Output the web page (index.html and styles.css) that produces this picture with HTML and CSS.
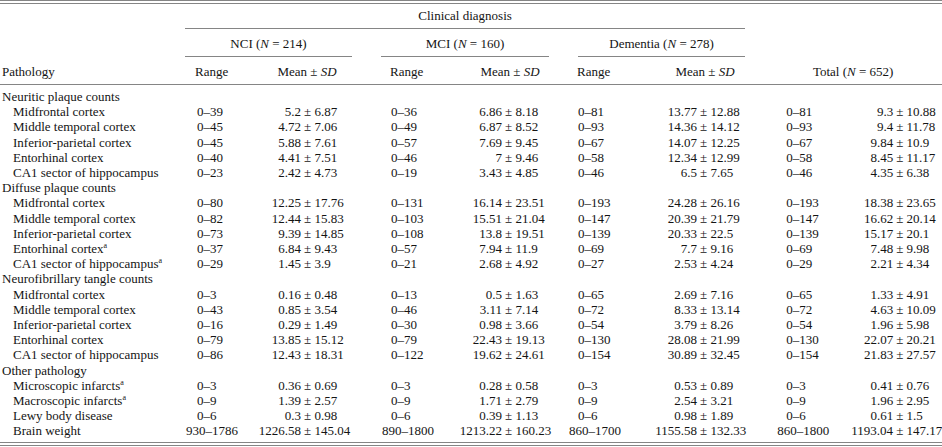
FILE: index.html
```html
<!DOCTYPE html>
<html>
<head>
<meta charset="utf-8">
<link rel="stylesheet" href="styles.css">
</head>
<body>
<table class="tbl">
<colgroup>
<col class="w-path"><col class="w-nr"><col class="w-nl"><col class="w-nm">
<col class="w-mr"><col class="w-ml"><col class="w-mm">
<col class="w-dr"><col class="w-dl"><col class="w-dm">
<col class="w-tr"><col class="w-tl"><col class="w-tm">
</colgroup>
<thead>
<tr class="h1">
<th></th>
<th colspan="9"><div class="rule rule-cd">Clinical diagnosis</div></th>
<th colspan="3"></th>
</tr>
<tr class="h2">
<th></th>
<th colspan="3"><div class="rule">NCI (<i>N</i> = 214)</div></th>
<th colspan="3"><div class="rule rule-mci">MCI (<i>N</i> = 160)</div></th>
<th colspan="3"><div class="rule rule-dem">Dementia (<i>N</i> = 278)</div></th>
<th colspan="3"></th>
</tr>
<tr class="h3">
<th class="path">Pathology</th>
<th class="rng n">Range</th>
<th colspan="2" class="mh mh-n">Mean ± <i>SD</i></th>
<th class="rng m">Range</th>
<th colspan="2" class="mh mh-m">Mean ± <i>SD</i></th>
<th class="rng d">Range</th>
<th colspan="2" class="mh mh-d">Mean ± <i>SD</i></th>
<th colspan="3" class="mh mh-t">Total (<i>N</i> = 652)</th>
</tr>
</thead>
<tbody>
<tr class="first"><td class="grp" colspan="13">Neuritic plaque counts</td></tr>
<tr><td class="item">Midfrontal cortex</td><td class="rng n">0–39</td><td class="ml">5.2</td><td class="mr">± 6.87</td><td class="rng m">0–36</td><td class="ml">6.86</td><td class="mr">± 8.18</td><td class="rng d">0–81</td><td class="ml">13.77</td><td class="mr">± 12.88</td><td class="rng t">0–81</td><td class="ml">9.3</td><td class="mr">± 10.88</td></tr>
<tr><td class="item">Middle temporal cortex</td><td class="rng n">0–45</td><td class="ml">4.72</td><td class="mr">± 7.06</td><td class="rng m">0–49</td><td class="ml">6.87</td><td class="mr">± 8.52</td><td class="rng d">0–93</td><td class="ml">14.36</td><td class="mr">± 14.12</td><td class="rng t">0–93</td><td class="ml">9.4</td><td class="mr">± 11.78</td></tr>
<tr><td class="item">Inferior-parietal cortex</td><td class="rng n">0–45</td><td class="ml">5.88</td><td class="mr">± 7.61</td><td class="rng m">0–57</td><td class="ml">7.69</td><td class="mr">± 9.45</td><td class="rng d">0–67</td><td class="ml">14.07</td><td class="mr">± 12.25</td><td class="rng t">0–67</td><td class="ml">9.84</td><td class="mr">± 10.9</td></tr>
<tr><td class="item">Entorhinal cortex</td><td class="rng n">0–40</td><td class="ml">4.41</td><td class="mr">± 7.51</td><td class="rng m">0–46</td><td class="ml">7</td><td class="mr">± 9.46</td><td class="rng d">0–58</td><td class="ml">12.34</td><td class="mr">± 12.99</td><td class="rng t">0–58</td><td class="ml">8.45</td><td class="mr">± 11.17</td></tr>
<tr><td class="item">CA1 sector of hippocampus</td><td class="rng n">0–23</td><td class="ml">2.42</td><td class="mr">± 4.73</td><td class="rng m">0–19</td><td class="ml">3.43</td><td class="mr">± 4.85</td><td class="rng d">0–46</td><td class="ml">6.5</td><td class="mr">± 7.65</td><td class="rng t">0–46</td><td class="ml">4.35</td><td class="mr">± 6.38</td></tr>
<tr><td class="grp" colspan="13">Diffuse plaque counts</td></tr>
<tr><td class="item">Midfrontal cortex</td><td class="rng n">0–80</td><td class="ml">12.25</td><td class="mr">± 17.76</td><td class="rng m">0–131</td><td class="ml">16.14</td><td class="mr">± 23.51</td><td class="rng d">0–193</td><td class="ml">24.28</td><td class="mr">± 26.16</td><td class="rng t">0–193</td><td class="ml">18.38</td><td class="mr">± 23.65</td></tr>
<tr><td class="item">Middle temporal cortex</td><td class="rng n">0–82</td><td class="ml">12.44</td><td class="mr">± 15.83</td><td class="rng m">0–103</td><td class="ml">15.51</td><td class="mr">± 21.04</td><td class="rng d">0–147</td><td class="ml">20.39</td><td class="mr">± 21.79</td><td class="rng t">0–147</td><td class="ml">16.62</td><td class="mr">± 20.14</td></tr>
<tr><td class="item">Inferior-parietal cortex</td><td class="rng n">0–73</td><td class="ml">9.39</td><td class="mr">± 14.85</td><td class="rng m">0–108</td><td class="ml">13.8</td><td class="mr">± 19.51</td><td class="rng d">0–139</td><td class="ml">20.33</td><td class="mr">± 22.5</td><td class="rng t">0–139</td><td class="ml">15.17</td><td class="mr">± 20.1</td></tr>
<tr><td class="item">Entorhinal cortex<sup>a</sup></td><td class="rng n">0–37</td><td class="ml">6.84</td><td class="mr">± 9.43</td><td class="rng m">0–57</td><td class="ml">7.94</td><td class="mr">± 11.9</td><td class="rng d">0–69</td><td class="ml">7.7</td><td class="mr">± 9.16</td><td class="rng t">0–69</td><td class="ml">7.48</td><td class="mr">± 9.98</td></tr>
<tr><td class="item">CA1 sector of hippocampus<sup>a</sup></td><td class="rng n">0–29</td><td class="ml">1.45</td><td class="mr">± 3.9</td><td class="rng m">0–21</td><td class="ml">2.68</td><td class="mr">± 4.92</td><td class="rng d">0–27</td><td class="ml">2.53</td><td class="mr">± 4.24</td><td class="rng t">0–29</td><td class="ml">2.21</td><td class="mr">± 4.34</td></tr>
<tr><td class="grp" colspan="13">Neurofibrillary tangle counts</td></tr>
<tr><td class="item">Midfrontal cortex</td><td class="rng n">0–3</td><td class="ml">0.16</td><td class="mr">± 0.48</td><td class="rng m">0–13</td><td class="ml">0.5</td><td class="mr">± 1.63</td><td class="rng d">0–65</td><td class="ml">2.69</td><td class="mr">± 7.16</td><td class="rng t">0–65</td><td class="ml">1.33</td><td class="mr">± 4.91</td></tr>
<tr><td class="item">Middle temporal cortex</td><td class="rng n">0–43</td><td class="ml">0.85</td><td class="mr">± 3.54</td><td class="rng m">0–46</td><td class="ml">3.11</td><td class="mr">± 7.14</td><td class="rng d">0–72</td><td class="ml">8.33</td><td class="mr">± 13.14</td><td class="rng t">0–72</td><td class="ml">4.63</td><td class="mr">± 10.09</td></tr>
<tr><td class="item">Inferior-parietal cortex</td><td class="rng n">0–16</td><td class="ml">0.29</td><td class="mr">± 1.49</td><td class="rng m">0–30</td><td class="ml">0.98</td><td class="mr">± 3.66</td><td class="rng d">0–54</td><td class="ml">3.79</td><td class="mr">± 8.26</td><td class="rng t">0–54</td><td class="ml">1.96</td><td class="mr">± 5.98</td></tr>
<tr><td class="item">Entorhinal cortex</td><td class="rng n">0–79</td><td class="ml">13.85</td><td class="mr">± 15.12</td><td class="rng m">0–79</td><td class="ml">22.43</td><td class="mr">± 19.13</td><td class="rng d">0–130</td><td class="ml">28.08</td><td class="mr">± 21.99</td><td class="rng t">0–130</td><td class="ml">22.07</td><td class="mr">± 20.21</td></tr>
<tr><td class="item">CA1 sector of hippocampus</td><td class="rng n">0–86</td><td class="ml">12.43</td><td class="mr">± 18.31</td><td class="rng m">0–122</td><td class="ml">19.62</td><td class="mr">± 24.61</td><td class="rng d">0–154</td><td class="ml">30.89</td><td class="mr">± 32.45</td><td class="rng t">0–154</td><td class="ml">21.83</td><td class="mr">± 27.57</td></tr>
<tr><td class="grp" colspan="13">Other pathology</td></tr>
<tr><td class="item">Microscopic infarcts<sup>a</sup></td><td class="rng n">0–3</td><td class="ml">0.36</td><td class="mr">± 0.69</td><td class="rng m">0–3</td><td class="ml">0.28</td><td class="mr">± 0.58</td><td class="rng d">0–3</td><td class="ml">0.53</td><td class="mr">± 0.89</td><td class="rng t">0–3</td><td class="ml">0.41</td><td class="mr">± 0.76</td></tr>
<tr><td class="item">Macroscopic infarcts<sup>a</sup></td><td class="rng n">0–9</td><td class="ml">1.39</td><td class="mr">± 2.57</td><td class="rng m">0–9</td><td class="ml">1.71</td><td class="mr">± 2.79</td><td class="rng d">0–9</td><td class="ml">2.54</td><td class="mr">± 3.21</td><td class="rng t">0–9</td><td class="ml">1.96</td><td class="mr">± 2.95</td></tr>
<tr><td class="item">Lewy body disease</td><td class="rng n">0–6</td><td class="ml">0.3</td><td class="mr">± 0.98</td><td class="rng m">0–6</td><td class="ml">0.39</td><td class="mr">± 1.13</td><td class="rng d">0–6</td><td class="ml">0.98</td><td class="mr">± 1.89</td><td class="rng t">0–6</td><td class="ml">0.61</td><td class="mr">± 1.5</td></tr>
<tr class="last"><td class="item">Brain weight</td><td class="rng n wide">930–1786</td><td class="ml">1226.58</td><td class="mr">± 145.04</td><td class="rng m wide">890–1800</td><td class="ml">1213.22</td><td class="mr">± 160.23</td><td class="rng d wide">860–1700</td><td class="ml">1155.58</td><td class="mr">± 132.33</td><td class="rng t wide">860–1800</td><td class="ml">1193.04</td><td class="mr">± 147.17</td></tr>
</tbody>
</table>
</body>
</html>
```

FILE: styles.css
```css
html, body {
  margin: 0;
  padding: 0;
  background: #ffffff;
}

.tbl {
  width: 942px;
  table-layout: fixed;
  border-collapse: separate;
  border-spacing: 0;
  font-family: "Liberation Serif", "Times New Roman", serif;
  font-size: 13px;
  color: #141414;
  border-top: 4px double #858585;
  border-bottom: 4px double #858585;
}

.w-path { width: 185px; }
.w-nr { width: 69px; }
.w-nl { width: 47px; }
.w-nm { width: 51px; }
.w-mr { width: 103px; }
.w-ml { width: 47px; }
.w-mm { width: 63px; }
.w-dr { width: 86px; }
.w-dl { width: 46px; }
.w-dm { width: 73px; }
.w-tr { width: 75px; }
.w-tl { width: 48px; }
.w-tm { width: 49px; }

th, td {
  padding: 0;
  line-height: 15.2px;
  white-space: nowrap;
  font-weight: normal;
  text-align: left;
  vertical-align: top;
}

th {
  line-height: 15px;
}

.h1 th {
  padding-top: 4px;
}

.h2 th {
  padding-top: 7px;
}

.rule {
  text-align: center;
  padding-bottom: 5px;
  border-bottom: 1px solid #858585;
}

.rule-cd { margin-right: 25px; }
.rule-mci { margin-left: 29px; margin-right: 16px; }
.rule-dem { margin-left: 13px; margin-right: 25px; }

.h3 th {
  padding-top: 7px;
  padding-bottom: 5px;
  border-bottom: 1px solid #858585;
}

.h3 .path { padding-left: 2px; }

.h3 .rng { padding-left: 0; }
.h3 .rng.n { padding-left: 10px; }
.h3 .rng.m { padding-left: 38px; }
.h3 .rng.d { padding-left: 12px; }

.mh { text-align: center; }
.mh-n { padding-left: 8px; }
.mh-d { padding-right: 11px; }
.mh-t { padding-right: 6px; }

.first td { padding-top: 4px; }
.last td { padding-bottom: 3.4px; }

.grp { padding-left: 2px; }
.item { padding-left: 13px; }

td.rng.n { padding-left: 12px; }
td.rng.m { padding-left: 39px; }
td.rng.d { padding-left: 13px; }
td.rng.t { padding-left: 16px; }
td.rng.n.wide { padding-left: 1px; }
td.rng.m.wide { padding-left: 30px; }
td.rng.d.wide { padding-left: 4px; }
td.rng.t.wide { padding-left: 7px; }

.ml { text-align: right; }
.mr { padding-left: 3px; }

sup {
  font-size: 8px;
  line-height: 0;
  vertical-align: 5px;
}
```
